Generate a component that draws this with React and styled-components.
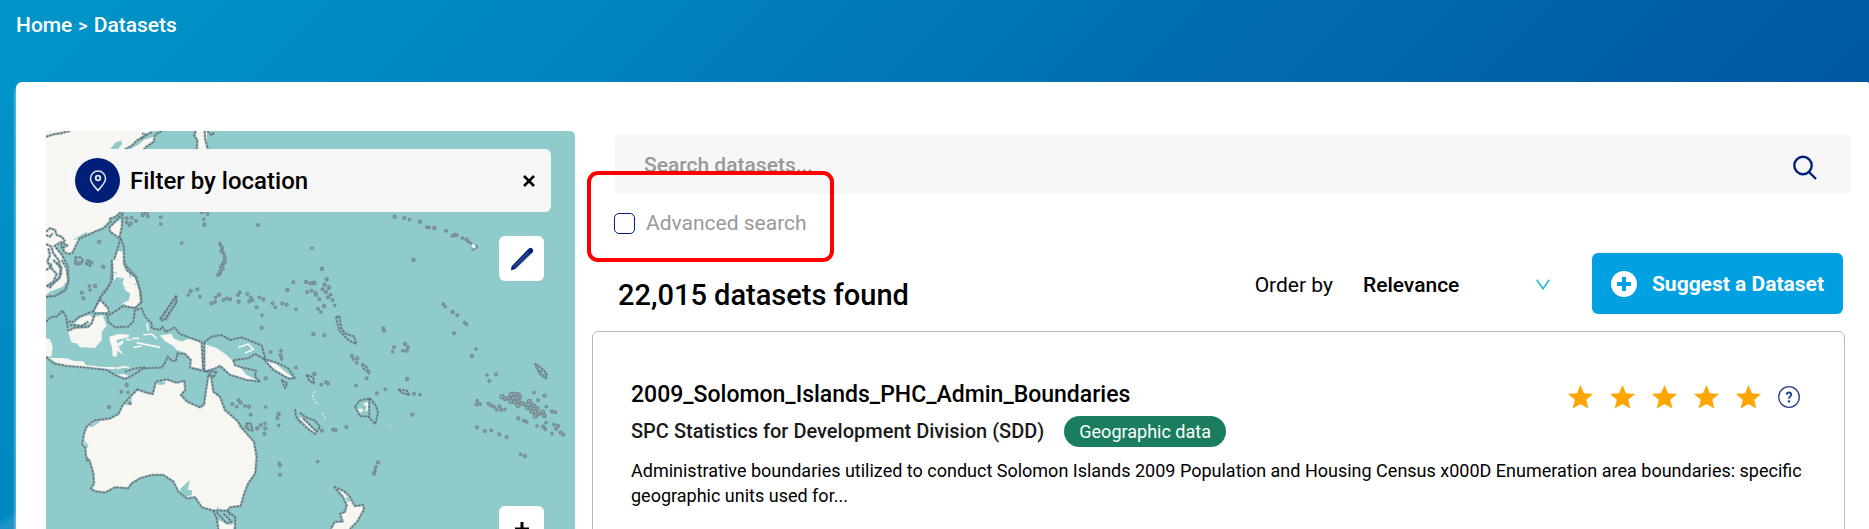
import React from "react";
import styled, { createGlobalStyle } from "styled-components";

const GlobalStyle = createGlobalStyle`
  *, *::before, *::after { box-sizing: border-box; }
  body {
    margin: 0;
    font-family: Roboto, "Liberation Sans", sans-serif;
    font-size: 21px;
    color: #000;
  }
  h1, h2, p { margin: 0; padding: 0; }
  button, input, select { font: inherit; }
`;

const navy = "#001f78";

const Page = styled.div`
  height: 100vh;
  overflow: hidden;
  display: flex;
  flex-direction: column;
  background:
    linear-gradient(150deg, transparent 35%, #1c93c6 60%) left bottom / 24px 24px no-repeat,
    linear-gradient(135deg, #0096c9 0%, #0085bf 25%, #006dad 52%, #005aa1 78%, #004f99 100%);
`;

const Breadcrumb = styled.nav`
  flex: none;
  padding: 12px 16px 0;
  height: 82px;
  line-height: 26px;
  font-weight: 500;
  color: #fff;
  a { color: inherit; text-decoration: none; }
  span { font-size: 18px; padding: 0 6px; }
`;

const Panel = styled.main`
  flex: 1;
  margin: 0 0 0 16px;
  padding: 49px 18px 0 30px;
  background: #fff;
  border-radius: 6px 2px 0 0;
  box-shadow: -1px 4px 3px rgba(255, 255, 255, 0.5);
  display: grid;
  grid-template-columns: minmax(0, 529fr) minmax(0, 1259fr);
  gap: 17px;
`;

const MapPane = styled.aside`
  position: relative;
  overflow: hidden;
  border-radius: 5px 5px 0 0;
  background: #90cbcb;
  padding: 18px 24px 0 21px;
`;

const MapDrawing = styled.svg`
  position: absolute;
  top: 0;
  left: 0;
  width: 100%;
`;

const FilterBar = styled.div`
  position: relative;
  height: 63px;
  display: flex;
  align-items: center;
  gap: 10px;
  padding: 0 8px;
  background: #f7f7f7;
  border-radius: 32px 6px 6px 32px;
`;

const PinBadge = styled.span`
  width: 45px;
  height: 45px;
  border-radius: 50%;
  background: ${navy};
  display: grid;
  place-items: center;
`;

const FilterTitle = styled.h2`
  flex: 1;
  font-size: 24px;
  line-height: 28px;
  font-weight: 500;
`;

const CloseButton = styled.button`
  width: 28px;
  height: 28px;
  padding: 0;
  border: 0;
  background: none;
  display: grid;
  place-items: center;
`;

const MapControls = styled.div`
  position: relative;
  display: flex;
  flex-direction: column;
  align-items: flex-end;
  gap: 225px;
  padding: 24px 7px 0 0;
`;

const MapButton = styled.button`
  flex: none;
  width: 45px;
  height: 45px;
  padding: 0;
  border: 0;
  border-radius: 6px;
  background: #fff;
  display: grid;
  place-items: center;
`;

const Results = styled.section`
  padding-top: 3px;
`;

const SearchForm = styled.form`
  margin-left: 22px;
`;

const SearchField = styled.div`
  height: 60px;
  display: flex;
  align-items: center;
  padding: 2px 34px 0 30px;
  background: #f7f7f7;
  border-radius: 6px;
`;

const SearchInput = styled.input`
  flex: 1;
  min-width: 0;
  border: 0;
  padding: 0;
  outline: 0;
  background: none;
  font-weight: 500;
  &::placeholder { color: #999; opacity: 1; }
`;

const SearchButton = styled.button`
  border: 0;
  padding: 4px 0 0;
  background: none;
  line-height: 0;
`;

const AdvancedRow = styled.div`
  position: relative;
  width: max-content;
  margin-top: 16px;
`;

const AdvancedLabel = styled.label`
  display: flex;
  align-items: center;
  gap: 11px;
  line-height: 26px;
  color: #999;
`;

const Checkbox = styled.input`
  appearance: none;
  width: 21px;
  height: 21px;
  margin: 0;
  border: 1px solid ${navy};
  border-radius: 5px;
  background: #fff;
`;

const Highlight = styled.span`
  position: absolute;
  inset: -39px -27px -26px -27px;
  border: 4px solid #f00;
  border-radius: 11px;
  pointer-events: none;
`;

const Toolbar = styled.div`
  display: flex;
  align-items: center;
  margin-top: 17px;
  padding: 0 8px 0 26px;
`;

const Count = styled.h1`
  flex: 1;
  padding-top: 22px;
  font-size: 29px;
  line-height: 34px;
  font-weight: 500;
`;

const OrderLabel = styled.label`
  padding-top: 2px;
  margin-right: 30px;
`;

const SelectWrap = styled.div`
  display: flex;
  align-items: center;
  padding-top: 2px;
  margin-right: 42px;
  svg { margin-left: -14px; pointer-events: none; }
`;

const OrderSelect = styled.select`
  appearance: none;
  width: 187px;
  padding: 0;
  border: 0;
  background: none;
  color: #000;
  font-weight: 500;
`;

const SuggestButton = styled.button`
  height: 61px;
  display: flex;
  align-items: center;
  gap: 15px;
  padding: 0 19px;
  border: 0;
  border-radius: 6px;
  background: #00a0e1;
  color: #fff;
  font-weight: 700;
`;

const DatasetCard = styled.article`
  margin: 17px 6px 0 0;
  height: 260px;
  padding: 48px 38px 0;
  border: 1px solid #bbb;
  border-radius: 6px;
`;

const CardHeader = styled.div`
  display: flex;
  justify-content: space-between;
  align-items: center;
  height: 30px;
`;

const CardTitle = styled.h2`
  font-size: 23px;
  line-height: 30px;
  font-weight: 500;
  a { color: inherit; text-decoration: none; }
`;

const Rating = styled.div`
  display: flex;
  align-items: center;
  gap: 17px;
  padding: 4px 6px 0 0;
  svg { display: block; }
`;

const Publisher = styled.div`
  display: flex;
  align-items: center;
  gap: 20px;
  margin-top: 6px;
  font-size: 20px;
  line-height: 31px;
  font-weight: 500;
  color: #1a1a1a;
`;

const Badge = styled.span`
  padding: 0 15px;
  border-radius: 16px;
  background: #1a7d60;
  color: #fff;
  font-size: 18px;
  font-weight: 400;
`;

const Description = styled.p`
  margin-top: 11px;
  font-size: 18px;
  line-height: 25px;
`;

const northLand = [
  "M48 33H395C385 45 360 62 350 75L330 90 290 240 272 276 262 285 240 296 220 325 195 335 150 355 140 372 128 398 115 402 102 396 100 382 112 376 90 372 74 380 96 405 114 440 112 500 80 525 48 530Z",
  "M272 298L275 330 265 355 240 335 238 322Z",
  "M265 392L280 396 280 440 295 455 315 475 325 500 332 550 318 560 280 556 305 545 300 520 285 510 278 480 260 470 250 485 246 440 255 410Z",
  "M497 33H532L528 90H506Z",
  "M200 570L215 540 240 570Z",
];
const northLines = [
  "M48 50L75 42 90 40 120 33",
  "M395 33L375 45 372 65 350 80 340 90M365 36L340 50 320 62 305 78 284 88M350 45L336 40M340 52L330 60",
  "M497 33L492 48 502 60 500 88M524 33L526 60 534 88M532 33L545 46 552 38",
  "M272 276L258 290 240 296 242 305 220 325 195 335 150 355 140 372 128 398 115 402 102 396 100 382 112 376 92 366 74 378 96 405 114 440 116 480 108 510 80 525 48 532",
  "M48 335L60 325 75 330 80 345 95 350 104 362 92 375 100 390M48 345L60 350 68 340M48 372L64 380 70 400 86 420 92 445 88 475 70 490 58 505",
  "M55 385L60 405 52 425 64 445 80 462 70 485 50 498M82 430L90 440 94 465",
  "M278 280L276 320 268 355 240 335 238 322 260 300Z",
  "M272 355L258 400 246 440 242 490 218 520 205 550 190 575M272 355L282 380 282 430 300 450 318 470 330 510 334 548 316 565",
  "M135 412L152 412 160 424 140 435ZM168 432L178 422 186 428 180 438ZM440 528L390 600M440 528L437 548 408 600M205 540L235 565 215 580",
  "M568 365L576 385 584 410 580 440 568 468",
];
const southLand = [
  "M412 388L440 398 458 402 468 365 500 358 530 368 553 362 556 390 543 405 562 425 600 442 612 434 618 390 625 345 634 352 640 395 660 410 675 450 712 482 735 515 762 545 770 590 766 640 745 670 733 700 722 738 690 742 682 752 640 752 605 742 585 712 560 715 535 695 520 665 490 645 455 645 420 655 395 670 385 685 345 682 315 698 285 694 272 685 282 672 280 640 270 605 258 590 256 565 247 552 252 520 260 500 282 482 330 475 355 462 370 432Z",
  "M200 205L262 205 285 170 308 165 320 198 305 215 305 240 285 264 240 262 230 250 215 248Z",
  "M220 188L248 170 270 165 280 175 268 192 240 194Z",
  "M138 235L150 238 158 260 155 288 138 292Z",
  "M145 293L200 295 225 304 250 304 258 315 300 320 350 322 345 328 250 325 180 316Z",
  "M328 230L355 222 388 224 386 232 350 240 352 250 372 240 368 252 355 260 370 285 352 272 350 290 338 288 336 262 330 245Z",
  "M480 226L515 222 520 235 545 245 565 236 605 246 607 328 565 322 572 300 555 278 530 270 520 258 495 244Z",
  "M612 252L650 264 680 285 695 300 718 320 740 345 775 362 740 360 690 345 665 318 640 325 612 332Z",
  "M340 345L370 342 395 350 375 356Z",
  "M338 0H368L360 20 342 32ZM365 42L385 36 390 55 405 62 402 90 415 115 418 140 400 138 366 130 385 122 392 100 375 90 378 65Z",
  "M280 155L302 122 330 146 322 158Z",
  "M795 302L825 310 860 338 880 354 855 348 820 325Z",
  "M655 780L690 795 706 788 700 807H655Z",
];
const southLines = [
  southLand[0],
  "M138 290L160 310 200 318 250 322 320 330 345 345 375 357 400 345 430 325 485 323 495 308 503 290 515 302 528 303 532 280 555 282 572 300 570 323 607 332",
  "M375 335L405 325 435 322 M138 185L155 170 170 170 188 152 198 170 205 212 225 203 265 200 275 190 285 160 322 160",
  "M205 185L222 185 235 172 268 158 280 155M210 195L245 198 265 185",
  "M335 0L338 55 320 90 300 112 280 155M300 118L325 145 328 165 370 138 405 145 425 125 422 95 408 52 380 30 372 0M320 160L325 185 345 202 385 200 400 185 405 150 425 145 435 170 455 190 455 204 480 210 487 200 497 216 523 203 540 222 605 246 610 335M613 248V332",
  "M612 247L635 230 665 225 690 240 725 232 785 256 797 300 765 282 745 295 700 300 705 315 725 322 768 332 765 350 780 365 740 360 690 345 660 318 640 328 612 335",
  "M790 296L830 308 865 325 885 355 865 356 820 330Z",
  "M528 108L530 128 490 182 480 178Z",
  "M138 110L165 108 195 90 205 65 200 25 185 0M138 30L155 20 150 8M140 80L160 70 180 50 185 20M160 0L180 20",
  "M617 335L650 335 640 352 628 340M640 752L650 775 655 807M650 757L680 790 695 785 670 760M685 755L706 772 705 807M682 752L690 765",
  "M885 448L888 470 903 490M845 360L855 385 862 370ZM740 490L752 490 758 512 742 508Z",
];
const eastLines = [
  "M108 172L118 168 124 205 135 220 163 230 168 252 145 240 118 212Z",
  "M165 440L178 422 210 415 228 438 234 458 226 492 205 470 180 468Z M208 415V472",
  "M0 458L14 470 45 482 60 500 45 522 22 505 0 482M10 475L50 515",
  "M102 680L130 692 150 710 164 738 190 735 192 748 172 785 150 807M102 680L128 710 140 735 135 755 120 762 128 785 105 785 92 807",
  "M20 345L40 352 42 370 28 362Z",
  "M186 315L198 318 208 340 190 325ZM296 388L320 392 328 405 304 398Z",
  "M706 312L722 322 740 340 738 355 718 340Z",
];
const southSpecks = [
  [228,8],[240,10],[262,3],[272,8],[310,20],[268,78],[285,78],[245,98],[270,90],[250,115],[670,10],[662,22],[660,35],[655,45],
  [565,105],[572,93],[592,88],[600,110],[634,130],[645,125],[647,112],[657,104],[670,120],[680,115],[690,118],[714,105],[720,97],[716,125],[742,102],[752,112],[748,124],[757,120],[778,112],[790,118],[770,142],[786,166],[785,203],[818,130],[826,142],[847,130],[860,134],[888,148],[862,90],[880,67],
  [155,350],[380,375],[364,395],[384,398],[327,441],[812,276],[843,272],[842,285],[845,296],[888,323],[797,355],[697,432],[710,440],[722,428],[716,420],[735,438],[747,440],[752,464],[797,441],[836,462],[832,474],[836,496],[772,505],[782,495],[795,490],[796,505],[793,521],[838,610],[840,616],[840,644],[262,600],[740,500],[390,430],
];
const eastSpecks = [
  [66,26],[18,66],[30,70],[42,68],[22,96],[35,92],[48,104],[58,118],[46,98],[80,58],[74,74],[86,84],[68,88],[78,96],[92,104],[84,112],[98,120],[104,136],[72,138],[54,146],[62,156],[40,222],[73,226],[250,204],[252,212],
  [282,262],[278,275],[315,252],[324,262],[308,272],[320,272],[156,288],[160,298],[172,295],[170,308],[188,314],[205,334],[200,355],[168,377],[43,342],[78,366],[64,374],[84,370],[231,400],[256,388],[321,357],[342,401],[360,404],[337,464],[66,512],[98,509],[106,510],[139,501],[53,605],[234,607],[227,621],[225,632],[222,641],
  [430,133],[436,140],[458,156],[472,166],[494,188],[499,193],[462,220],[528,267],[516,288],[340,0],[561,345],[588,343],[568,363],[702,398],[734,407],[714,421],[532,422],[530,433],[540,432],[565,430],[573,436],[582,440],[590,450],[598,440],[604,450],[615,448],[655,475],[672,482],[680,486],[531,502],[555,513],[574,511],[598,523],[620,531],[711,498],[728,460],[734,468],[739,440],[756,454],[766,457],[738,488],[730,500],[736,508],[762,494],[774,498],[768,506],[756,521],[782,518],[790,524],[662,583],[675,588],
  [712,322],[722,334],[734,346],
];
const tuamotu = [
  [606,410],[616,416],[626,414],[634,404],[644,402],[656,404],[640,414],[650,414],[660,412],[632,424],[644,426],[656,424],[654,436],[666,430],[676,434],[688,424],[694,434],[682,444],[692,444],[702,438],[712,446],[696,454],[706,456],[716,462],[706,468],[728,456],[732,466],
];
const northSpecks = [
  [290,295],[305,293],[290,308],[302,310],[318,303],[298,316],[338,286],[350,280],[354,290],[340,278],[392,292],[392,312],[516,276],[532,282],[521,298],[523,314],[684,315],[455,369],[208,365],[220,440],
  [570,372],[576,382],[574,394],[582,402],[584,414],[584,425],[576,434],[578,446],[570,458],[564,464],
];
const hawaii = [
  [284,290],[313,294],[328,299],[360,305],[381,322],[387,323],[403,324],[438,332],[457,348],[464,345],[470,346],[487,354],[499,358],[504,364],[512,370],[528,380],[520,386],[36,384],[341,419],[66,447],[18,486],[34,490],[44,490],[80,478],[74,494],[88,502],
];

const Specks = ({ points, r = 4.5 }) =>
  points.map(([x, y], i) => <circle key={i} cx={x} cy={y} r={r - (i % 3) * 0.5} />);

const Lines = ({ paths }) => (
  <>
    <path d={paths.join("")} stroke="#8aa5aa" strokeWidth="8" strokeOpacity=".7" />
    <path d={paths.join("")} stroke="#55717c" strokeWidth="4" strokeDasharray="7 4" />
  </>
);

const PacificMap = () => (
  <MapDrawing viewBox="0 0 529 398" role="img" aria-label="Map of the Pacific">
    <g fill="none" strokeLinejoin="round">
      <g transform="translate(-16 -11) scale(.33333)">
        <path d={northLand.join("")} fill="#f7f6f1" />
        <path d="M240 88L258 66 274 62 276 72 264 88ZM128 360L170 335 172 347 215 328 150 356ZM100 500L60 515 50 530 90 520ZM284 90L305 76 340 50 370 33H400L330 95Z" fill="#90cbcb" />
        <path d="M372 50L380 55 352 78 340 88 300 88 325 74 340 60Z" fill="#f7f6f1" />
        <g fill="#90cbcb">
          <path d="M250 460L258 452 264 466ZM262 475L272 468 282 476 276 490ZM285 464L300 462 304 474 290 476ZM300 485L312 482 318 494 306 500ZM285 500L294 496 292 512Z" />
        </g>
        <Lines paths={northLines} />
        <g stroke="#748c93" strokeWidth="4" fill="#93aaaf"><Specks points={northSpecks} /></g>
      </g>
      <g transform="translate(-46 129) scale(.33333)">
        <path d={southLand.join("")} fill="#f7f6f1" />
        <path
          d="M395 235H418M400 262L425 258M410 248L480 262M430 225L455 222 470 236M440 190L445 212M378 238L392 240M350 326L372 320 388 324M380 334L410 322M690 340L715 338M700 322L735 350M715 262L745 252 760 268 735 280M345 40L365 55M368 68L380 82M345 30L360 45M395 66V80"
          stroke="#f7f6f1"
          strokeWidth="5"
        />
        <path
          d="M268 498L290 484 300 486 275 502ZM374 432L395 410 394 424 380 436ZM472 366L500 366 490 374 474 374ZM553 405L544 410 570 424ZM714 482L730 500 728 512 716 500ZM252 540L266 558 258 568ZM570 660L542 685 540 700 555 712 576 704 575 690 563 690ZM652 740L664 750 650 752ZM138 103L150 96 188 80 200 62 196 88 160 106Z"
          fill="#90cbcb"
        />
        <Lines paths={southLines} />
        <g stroke="#748c93" strokeWidth="4" fill="#93aaaf"><Specks points={southSpecks} /></g>
      </g>
      <g transform="translate(254 129) scale(.33333)">
        <path d="M102 680L130 692 150 710 164 738 190 735 192 748 172 785 150 807H92L105 785 128 785 120 762 135 755 140 735 128 710ZM168 445L205 425 205 450 180 462ZM0 470L48 515 44 520 0 486Z" fill="#f7f6f1" />
        <path d="M186 430L200 440 192 462 176 460 168 445ZM138 710L150 715 150 726 140 722Z" fill="#90cbcb" />
        <path d="M172 446H188V456H174ZM188 432L202 426 200 436Z" fill="#f7f6f1" />
        <path d="M45 392L36 412 56 436M66 458L78 478M266 491L270 494" stroke="#d7e8e2" strokeWidth="4" strokeDasharray="8 5" />
        <Lines paths={eastLines} />
        <g stroke="#748c93" strokeWidth="4" fill="#93aaaf">
          <Specks points={eastSpecks} />
          <Specks points={tuamotu} r={6} />
        </g>
      </g>
      <g transform="translate(254 -11) scale(.33333)">
        <g stroke="#748c93" strokeWidth="4" fill="#93aaaf"><Specks points={hawaii} /></g>
        <path d="M514 376L520 372 528 380 520 387Z" fill="#fff" />
      </g>
    </g>
  </MapDrawing>
);

const PinIcon = () => (
  <svg width="18" height="22" viewBox="0 0 18 22" fill="none" stroke="#e6e9f3" strokeWidth="1.5">
    <path d="M9 20.500C6 17 1.500 13 1.500 8.500a7.500 7.500 0 0 1 15 0C16.500 13 12 17 9 20.500Z" />
    <circle cx="9" cy="8" r="2.300" strokeWidth="1.800" />
  </svg>
);

const CloseIcon = () => (
  <svg width="12" height="12" viewBox="0 0 12 12" stroke="#000" strokeWidth="2.600">
    <path d="M1 1L11 11M11 1L1 11" />
  </svg>
);

const PencilIcon = () => (
  <svg width="24" height="24" viewBox="0 0 24 24">
    <path d="M1 23.500L1.500 19.500 18 2.300Q20 0 22 1.200 24 3.500 22.500 5.500L6 21.500Z" fill={navy} />
    <path d="M3.500 20L18.500 4.800M5.500 21L20 6.500" stroke="#7b89b8" strokeWidth=".8" />
  </svg>
);

const PlusIcon = () => (
  <svg width="14" height="14" viewBox="0 0 14 14" stroke="#000" strokeWidth="3">
    <path d="M7 0V14M0 7H14" />
  </svg>
);

const SearchIcon = () => (
  <svg width="24" height="25" viewBox="0 0 24 25" fill="none" stroke={navy} strokeWidth="2.400">
    <circle cx="10" cy="10.500" r="8.700" />
    <path d="M16 17L23 24" />
  </svg>
);

const ChevronIcon = () => (
  <svg width="14" height="11" viewBox="0 0 14 11" fill="none" stroke="#2bbcd4" strokeWidth="1.700">
    <path d="M.7.700L7 9.700 13.300.7" />
  </svg>
);

const AddIcon = () => (
  <svg width="26" height="26" viewBox="0 0 26 26">
    <circle cx="13" cy="13" r="13" fill="#fff" />
    <path d="M13 6V20M6 13H20" stroke="#00a0e1" strokeWidth="4" />
  </svg>
);

const StarIcon = () => (
  <svg width="25" height="24" viewBox="0 0 25 24">
    <path d="M12.500 0L16 8.300 25 9 18.200 14.800 20.300 23.600 12.500 18.900 4.700 23.600 6.800 14.800 0 9 9 8.300Z" fill="#ffa500" />
  </svg>
);

const HelpIcon = () => (
  <svg width="22" height="22" viewBox="0 0 22 22" fill="none" stroke="#27408b">
    <circle cx="11" cy="11" r="10.300" strokeWidth="1.300" />
    <path d="M8.700 8.600C8.800 5.800 13.300 5.900 13.200 8.600 13.100 10.400 11 10.400 11 12.800" strokeWidth="1.900" />
    <path d="M11 14.300V16.500" strokeWidth="2.200" />
  </svg>
);

export default function App() {
  return (
    <Page>
      <GlobalStyle />
      <Breadcrumb aria-label="Breadcrumb">
        <a href="#home">Home</a>
        <span>&gt;</span>
        <a href="#datasets">Datasets</a>
      </Breadcrumb>
      <Panel>
        <MapPane>
          <PacificMap />
          <FilterBar>
            <PinBadge><PinIcon /></PinBadge>
            <FilterTitle>Filter by location</FilterTitle>
            <CloseButton aria-label="Close"><CloseIcon /></CloseButton>
          </FilterBar>
          <MapControls>
            <MapButton aria-label="Draw area"><PencilIcon /></MapButton>
            <MapButton aria-label="Zoom in"><PlusIcon /></MapButton>
          </MapControls>
        </MapPane>
        <Results>
          <SearchForm onSubmit={(e) => e.preventDefault()}>
            <SearchField>
              <SearchInput type="text" aria-label="Search datasets" placeholder="Search datasets..." />
              <SearchButton type="submit" aria-label="Search"><SearchIcon /></SearchButton>
            </SearchField>
            <AdvancedRow>
              <AdvancedLabel>
                <Checkbox type="checkbox" />
                Advanced search
              </AdvancedLabel>
              <Highlight />
            </AdvancedRow>
          </SearchForm>
          <Toolbar>
            <Count>22,015 datasets found</Count>
            <OrderLabel htmlFor="order">Order by</OrderLabel>
            <SelectWrap>
              <OrderSelect id="order" defaultValue="relevance">
                <option value="relevance">Relevance</option>
              </OrderSelect>
              <ChevronIcon />
            </SelectWrap>
            <SuggestButton type="button">
              <AddIcon />
              Suggest a Dataset
            </SuggestButton>
          </Toolbar>
          <DatasetCard>
            <CardHeader>
              <CardTitle><a href="#dataset">2009_Solomon_Islands_PHC_Admin_Boundaries</a></CardTitle>
              <Rating aria-label="5 out of 5 stars">
                {[1, 2, 3, 4, 5].map((n) => <StarIcon key={n} />)}
                <HelpIcon />
              </Rating>
            </CardHeader>
            <Publisher>
              SPC Statistics for Development Division (SDD)
              <Badge>Geographic data</Badge>
            </Publisher>
            <Description>
              Administrative boundaries utilized to conduct Solomon Islands 2009 Population and Housing Census x000D
              Enumeration area boundaries: specific geographic units used for...
            </Description>
          </DatasetCard>
        </Results>
      </Panel>
    </Page>
  );
}
